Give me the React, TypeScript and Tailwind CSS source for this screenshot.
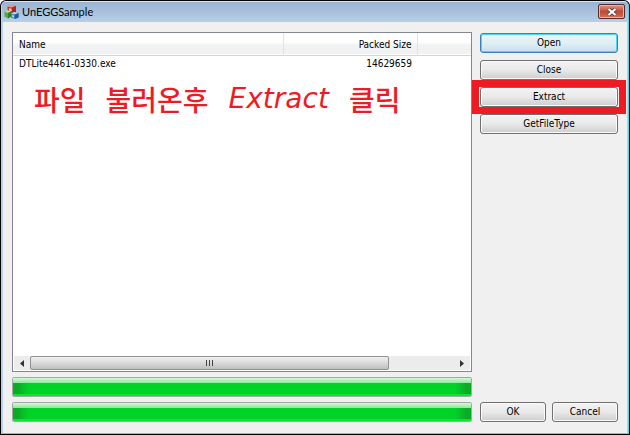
import type { ReactNode } from "react";

interface FileRow {
    name: string;
    packedSize: number;
}

interface DialogButtonProps {
    children: ReactNode;
    focused?: boolean;
    className?: string;
}

const files: FileRow[] = [{ name: "DTLite4461-0330.exe", packedSize: 14629659 }];

function AppIcon() {
    return (
        <svg className="h-4 w-4 shrink-0" viewBox="0 0 16 16" aria-hidden="true">
            <path d="M3.500 2.500 7 1l5 1v6L8 10 3.500 8z" fill="#d2372a" />
            <path d="M3.500 2.500 7 1l5 1-4 1.500z" fill="#f2a08e" />
            <path d="M8 3.500 12 2v6l-4 2z" fill="#b3241c" />
            <path d="M5 4.200l2.500.5v2.500L5 6.500z" fill="#fbd9cf" />
            <path d="M.5 7.500 3 6l4 1.500v5L4 14.500l-3.500-2z" fill="#55a845" />
            <path d="M.5 7.500 3 6l4 1.500L4 9z" fill="#b5dd96" />
            <path d="M4 9l3-1.500v5l-3 2z" fill="#2f7f2d" />
            <path d="M7 9.500 10 8l4.500 1v4.500L11 15l-4-1.500z" fill="#3c7fbd" />
            <path d="M7 9.500 10 8l4.500 1-3.500 1.500z" fill="#b3dbf2" />
            <path d="M11 10.500 14.500 9v4.500L11 15z" fill="#205a98" />
            <path d="M8 11l2 .5v2L8 13z" fill="#a9d5f2" />
        </svg>
    );
}

function DialogButton({ children, focused = false, className = "" }: DialogButtonProps) {
    const look = focused
        ? "border-[#3c7fb1] bg-linear-to-b from-[#eef6fa] via-[#e0eef5] to-[#c8dfea] shadow-[inset_0_0_0_1px_#4bd5f7]"
        : "border-[#707070] bg-linear-to-b from-[#f3f3f3] from-0% via-[#e9e9e9] via-50% to-[#cdcdcd] shadow-[inset_0_0_0_1px_#fafafa]";
    return (
        <button type="button" className={`h-5 rounded-[3px] border text-center leading-4 ${look} ${className}`}>
            {children}
        </button>
    );
}

function ProgressBar({ label }: { label: string }) {
    return (
        <div
            role="progressbar"
            aria-label={label}
            aria-valuenow={100}
            className="flex h-5 flex-col overflow-hidden rounded-[2px] border border-[#a3aaa3]"
        >
            <div className="h-[5px] bg-linear-to-b from-[#d3f8d6] to-[#93e59f]" />
            <div className="flex flex-1 justify-between bg-[#00d328]">
                <div className="w-4 bg-linear-to-r from-[#0cab25] from-30% to-[#00d328]" />
                <div className="w-4 bg-linear-to-r from-[#00d328] to-[#0cab25] to-70%" />
            </div>
            <div className="h-[2px] bg-[#10e234]" />
        </div>
    );
}

function ScrollBar() {
    return (
        <div className="mx-px flex h-[14px] items-stretch bg-[#ececec]">
            <button type="button" aria-label="Scroll left" className="flex w-4 items-center justify-center">
                <svg className="h-[7px] w-1" viewBox="0 0 4 7"><path d="M4 0v7L0 3.500z" fill="#333" /></svg>
            </button>
            <div className="flex w-[359px] items-center justify-center gap-[2px] rounded-[2px] border border-[#929292] bg-linear-to-b from-[#f0f0f0] via-[#dcdcdc] via-45% to-[#bdbec0]">
                <span className="h-[6px] w-px bg-[#444]" />
                <span className="h-[6px] w-px bg-[#444]" />
                <span className="h-[6px] w-px bg-[#444]" />
            </div>
            <button type="button" aria-label="Scroll right" className="ml-auto flex w-4 items-center justify-center">
                <svg className="h-[7px] w-1" viewBox="0 0 4 7"><path d="M0 0v7l4-3.500z" fill="#333" /></svg>
            </button>
        </div>
    );
}

function FileList() {
    return (
        <div className="relative flex flex-1 flex-col border border-[#828790] bg-white pb-px">
            <table className="w-full table-fixed border-collapse">
                <colgroup>
                    <col className="w-[270px]" />
                    <col className="w-[134px]" />
                    <col />
                </colgroup>
                <thead>
                    <tr className="h-[22px] border-b border-[#d5d5d5] bg-linear-to-b from-white from-40% to-[#f1f2f4] to-60%">
                        <th className="border-r border-[#e0e3e6] pt-[3px] pl-[6px] text-left font-normal">Name</th>
                        <th className="border-r border-[#e0e3e6] pt-[3px] pr-[5px] text-right font-normal">Packed Size</th>
                        <th aria-label="Empty"></th>
                    </tr>
                </thead>
                <tbody>
                    {files.map((file) => (
                        <tr key={file.name} className="h-[17px]">
                            <td className="pl-[6px]">{file.name}</td>
                            <td className="pr-[5px] text-right">{file.packedSize}</td>
                            <td></td>
                        </tr>
                    ))}
                </tbody>
            </table>
            <p className="absolute top-[46px] left-[21px] flex items-center gap-5 whitespace-nowrap font-['Noto_Sans_CJK_KR',sans-serif] text-[28px] leading-10 font-medium text-[#ed1c24]">
                <span>파일</span>
                <span>불러온후</span>
                <span className="font-['DejaVu_Sans',sans-serif] font-normal italic">Extract</span>
                <span>클릭</span>
            </p>
            <div className="mt-auto">
                <ScrollBar />
            </div>
        </div>
    );
}

function App() {
    return (
        <div className="flex min-h-screen flex-col rounded-t-[6px] bg-black p-px font-['DejaVu_Sans_Condensed','DejaVu_Sans',sans-serif] text-[10px] leading-4 text-black">
            <div className="flex flex-1 flex-col rounded-t-[5px] border border-[#3fdcf2] border-t-[#d8e8f5] border-l-[#b9d1ea] bg-[#b9d1ea]">
                <header className="flex h-5 items-center rounded-t-[4px] bg-linear-to-b from-[#98b4d2] to-[#b8cfe8] pr-[3px] pl-[2px]">
                    <AppIcon />
                    <h1 className="ml-[2px] flex-1 font-['Lato',sans-serif] text-[11px]">UnEGGSample</h1>
                    <button
                        type="button"
                        aria-label="Close window"
                        className="mb-px flex h-[15px] w-[27px] items-center justify-center rounded-[2px] border border-[#5b2a2a] bg-linear-to-b from-[#dc9a8c] from-0% via-[#bd4a35] via-50% to-[#d0705c] shadow-[inset_0_0_0_1px_#e8b5aa]"
                    >
                        <svg className="h-2 w-[10px]" viewBox="0 0 10 8" aria-hidden="true">
                            <path d="M1.500 1l7 6M8.500 1l-7 6" stroke="#4d3636" strokeWidth="3.600" />
                            <path d="M1.500 1l7 6M8.500 1l-7 6" stroke="#fff" strokeWidth="2.200" />
                        </svg>
                    </button>
                </header>
                <main className="mx-px flex flex-1 gap-2 bg-[#f0f0f0] pt-[10px] pr-[9px] pb-[11px] pl-[9px]">
                    <section className="flex flex-1 flex-col gap-[5px]">
                        <FileList />
                        <ProgressBar label="File progress" />
                        <ProgressBar label="Total progress" />
                    </section>
                    <aside className="flex w-[138px] flex-col">
                        <div className="mt-px flex flex-col gap-[7px]">
                            <DialogButton focused>Open</DialogButton>
                            <DialogButton>Close</DialogButton>
                            <div className="relative flex">
                                <DialogButton className="flex-1">Extract</DialogButton>
                                <div className="pointer-events-none absolute -inset-x-2 -inset-y-[7px] border-7 border-[#ed1c24]" />
                            </div>
                            <DialogButton>GetFileType</DialogButton>
                        </div>
                        <div className="mt-auto grid grid-cols-2 gap-[6px]">
                            <DialogButton>OK</DialogButton>
                            <DialogButton>Cancel</DialogButton>
                        </div>
                    </aside>
                </main>
            </div>
        </div>
    );
}

export default App;
